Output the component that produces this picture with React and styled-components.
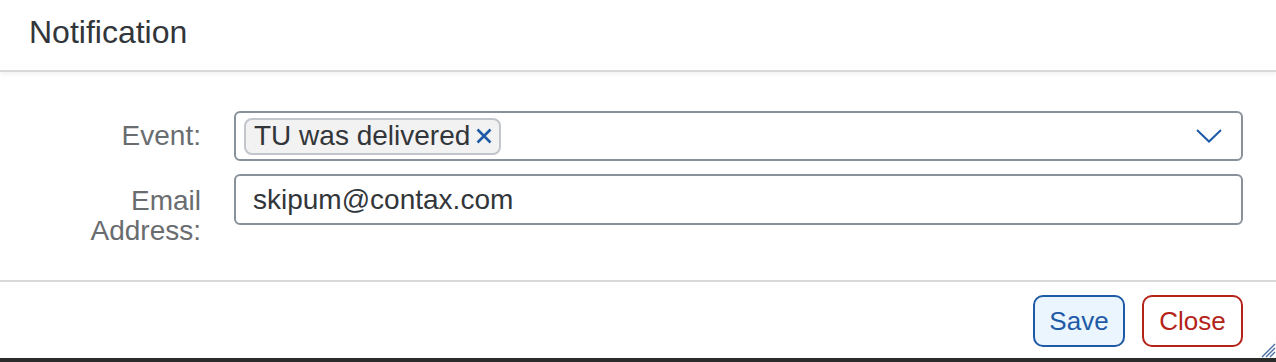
import React from 'react';
import styled, { createGlobalStyle } from 'styled-components';

const GlobalStyle = createGlobalStyle`
  html, body {
    margin: 0;
    padding: 0;
    background: #fff;
  }
  body {
    font-family: "Liberation Sans", Arial, sans-serif;
    color: #32363a;
  }
`;

const Dialog = styled.div`
  position: relative;
  width: 1276px;
  background: #fff;
  display: flex;
  flex-direction: column;
`;

const Header = styled.header`
  position: relative;
  z-index: 1;
  height: 65px;
  padding: 0 29px 5px;
  display: flex;
  align-items: center;
  border-bottom: 2px solid #d9d9d9;
  box-shadow: 0 2px 5px rgba(0, 0, 0, 0.06);
`;

const Title = styled.h1`
  margin: 0;
  font-size: 32px;
  font-weight: 400;
  color: #32363a;
`;

const Content = styled.div`
  display: grid;
  grid-template-columns: 172px 1fr;
  column-gap: 33px;
  row-gap: 13px;
  padding: 39px 33px 34px 29px;
`;

const Label = styled.label`
  font-size: 28px;
  line-height: ${(p) => (p.$multi ? '30px' : 'normal')};
  color: #6a6d70;
  text-align: right;
  align-self: ${(p) => (p.$multi ? 'start' : 'center')};
  padding-top: ${(p) => (p.$multi ? '12px' : '0')};
`;

const Field = styled.div`
  box-sizing: border-box;
  height: ${(p) => p.$height || 50}px;
  align-self: start;
  border: 2px solid #89919a;
  border-radius: 6px;
  background: #fff;
  display: flex;
  align-items: center;
  padding: 0 8px;
  font-size: 28px;
  color: #32363a;
`;

const Token = styled.span`
  box-sizing: border-box;
  height: 37px;
  display: inline-flex;
  align-items: center;
  gap: 6px;
  padding: 0 7px 0 8px;
  border: 2px solid #c2c6cb;
  border-radius: 8px;
  background: #f2f2f2;
  font-size: 28px;
  color: #32363a;
`;

const Spacer = styled.div`
  flex: 1;
`;

const Chevron = styled.span`
  display: flex;
  align-items: center;
  margin-right: 11px;
`;

const TextValue = styled.span`
  padding-left: 9px;
`;

const Footer = styled.footer`
  border-top: 2px solid #d9d9d9;
  padding: 13px 33px 11px;
  display: flex;
  justify-content: flex-end;
  gap: 17px;
`;

const Button = styled.button`
  box-sizing: border-box;
  height: 52px;
  width: ${(p) => p.$width}px;
  padding: 0;
  border-radius: 10px;
  border: 2px solid ${(p) => p.$color};
  color: ${(p) => p.$color};
  background: ${(p) => p.$bg};
  font-family: "Liberation Sans", Arial, sans-serif;
  font-size: 26px;
  cursor: pointer;
`;

const PageEdge = styled.div`
  height: 4px;
  background: #2b2b2b;
`;

const Resize = styled.span`
  position: absolute;
  right: 0;
  bottom: 4px;
  width: 16px;
  height: 16px;
  display: block;
`;

const App = () => {
  return (
    <>
      <GlobalStyle />
      <Dialog>
        <Header>
          <Title>Notification</Title>
        </Header>
        <Content>
          <Label>Event:</Label>
          <Field $height={50}>
            <Token>
              TU was delivered
              <svg width="16" height="16" viewBox="0 0 16 16">
                <path d="M1.5 1.5 L14.5 14.5 M14.5 1.5 L1.5 14.5" stroke="#1f5aa6" strokeWidth="2.6" />
              </svg>
            </Token>
            <Spacer />
            <Chevron>
              <svg width="26" height="14" viewBox="0 0 26 14">
                <path d="M1 1 L13 12.5 L25 1" fill="none" stroke="#1f5aa6" strokeWidth="2" />
              </svg>
            </Chevron>
          </Field>
          <Label $multi>Email Address:</Label>
          <Field $height={51}>
            <TextValue>skipum@contax.com</TextValue>
          </Field>
        </Content>
        <Footer>
          <Button $width={92} $color="#1f5aa6" $bg="#ebf5fe">Save</Button>
          <Button $width={101} $color="#b42318" $bg="#fff">Close</Button>
        </Footer>
        <PageEdge />
        <Resize>
          <svg width="16" height="16" viewBox="0 0 16 16">
            <path d="M2 15 L15 2 M6 15 L15 6 M10 15 L15 10" stroke="#4a6ea8" strokeWidth="1.3" />
          </svg>
        </Resize>
      </Dialog>
    </>
  );
};

export default App;
